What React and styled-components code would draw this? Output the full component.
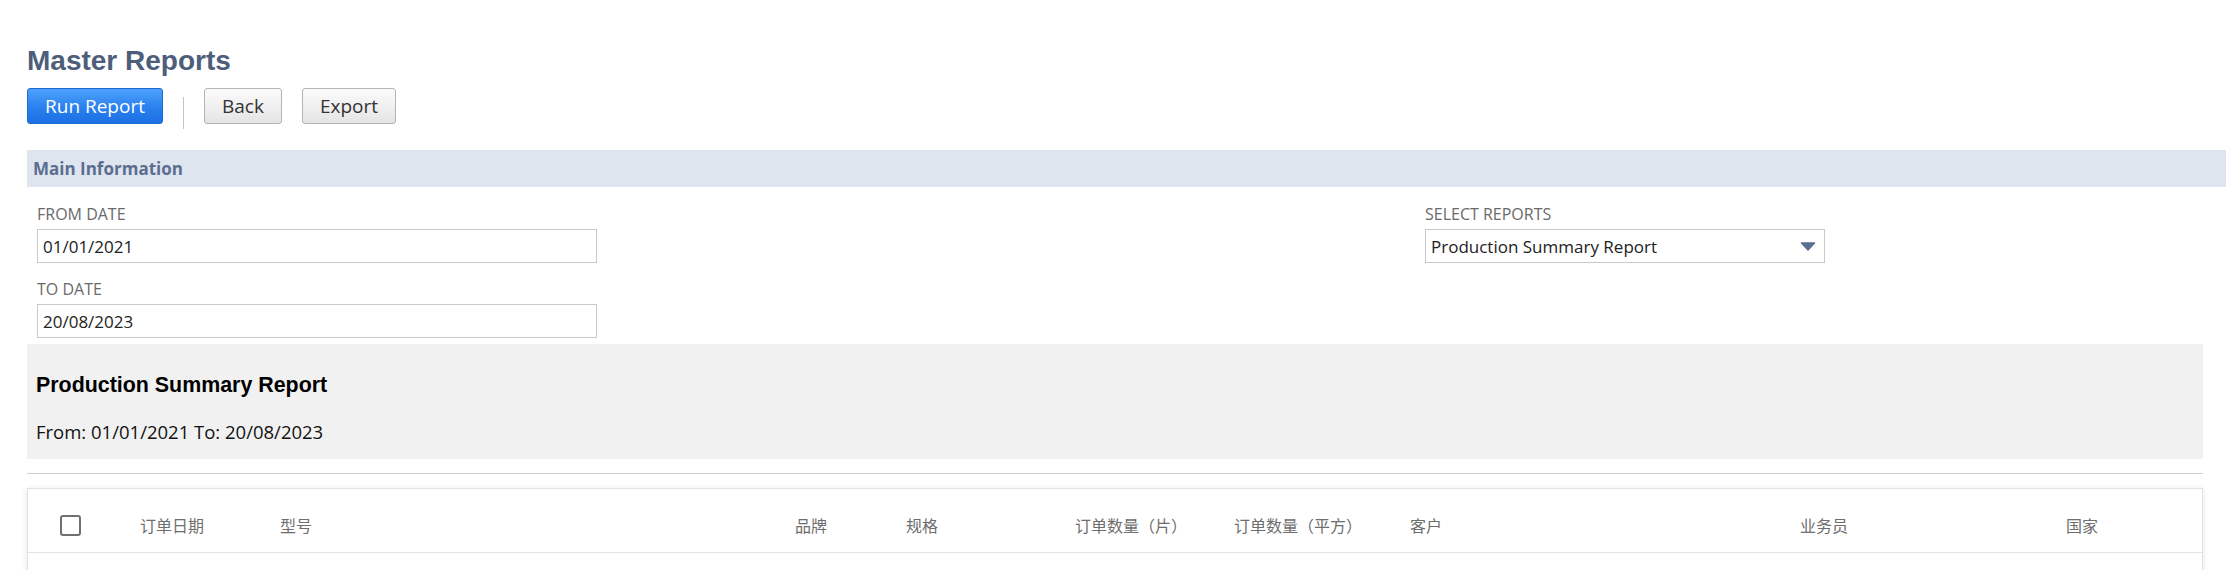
import React from "react";
import styled, { createGlobalStyle } from "styled-components";

const GlobalStyle = createGlobalStyle`
  html, body {
    margin: 0;
    padding: 0;
    background: #ffffff;
  }
  body {
    font-family: "Open Sans", "Noto Sans", sans-serif;
    overflow: hidden;
  }
`;

const Page = styled.div`
  padding: 45px 23px 0 27px;
`;

const Title = styled.h1`
  margin: 0;
  font-family: "Liberation Sans", Arial, sans-serif;
  font-weight: 700;
  font-size: 28px;
  line-height: 32px;
  color: #4d5e7a;
`;

const Toolbar = styled.div`
  display: flex;
  align-items: flex-start;
  gap: 20px;
  margin-top: 11px;
  height: 36px;
`;

const Button = styled.button`
  box-sizing: border-box;
  height: 36px;
  padding: 0 17px;
  border-radius: 3px;
  font-family: "Open Sans", sans-serif;
  font-weight: 500;
  font-size: 19px;
  line-height: 34px;
  cursor: pointer;
  border: 1px solid ${(p) => (p.$primary ? "#1d69cf" : "#b4b4b4")};
  color: ${(p) => (p.$primary ? "#ffffff" : "#333333")};
  background: ${(p) =>
    p.$primary
      ? "linear-gradient(to bottom, #4ea2fa 0%, #2a80ef 55%, #1b70e4 100%)"
      : "linear-gradient(to bottom, #fbfbfb 0%, #eeeeee 60%, #e4e4e4 100%)"};
`;

const Divider = styled.div`
  flex: none;
  width: 1px;
  height: 32px;
  margin-top: 9px;
  background: #c4c4c4;
`;

const SectionBand = styled.div`
  margin-top: 26px;
  margin-right: -23px;
  height: 37px;
  padding-left: 6px;
  background: #dfe5ef;
  font-family: "Open Sans", sans-serif;
  font-weight: 700;
  font-size: 17px;
  line-height: 37px;
  color: #5b6e90;
`;

const FormGrid = styled.div`
  display: grid;
  grid-template-columns: 1388px 400px;
  padding-left: 10px;
  margin-top: 17px;
`;

const FieldColumn = styled.div`
  display: flex;
  flex-direction: column;
  gap: 16px;
`;

const Field = styled.div`
  display: flex;
  flex-direction: column;
  width: ${(p) => p.$width}px;
`;

const Label = styled.div`
  font-family: "Open Sans", sans-serif;
  font-size: 16px;
  line-height: 20px;
  color: #6a6a6a;
  text-transform: uppercase;
`;

const TextInput = styled.div`
  box-sizing: border-box;
  margin-top: 5px;
  height: 34px;
  border: 1px solid #c9c9c9;
  padding-left: 5px;
  font-family: "Open Sans", sans-serif;
  font-size: 17px;
  line-height: 31px;
  color: #222222;
  display: flex;
  align-items: center;
  justify-content: space-between;
`;

const Arrow = styled.svg`
  width: 16px;
  height: 9px;
  margin-right: 8px;
  margin-top: 1px;
`;

const ReportPanel = styled.div`
  margin-top: 6px;
  background: #f1f1f1;
  padding: 29px 9px 15px;
`;

const ReportTitle = styled.div`
  font-family: "Liberation Sans", Arial, sans-serif;
  font-weight: 700;
  font-size: 21.4px;
  line-height: 24px;
  color: #000000;
`;

const ReportRange = styled.div`
  margin-top: 23px;
  font-family: "Open Sans", sans-serif;
  font-size: 18.5px;
  line-height: 24px;
  color: #111111;
`;

const Rule = styled.div`
  margin-top: 14px;
  height: 1px;
  background: #cfcfcf;
`;

const TableCard = styled.div`
  margin-top: 14px;
  border: 1px solid #e2e2e2;
  background: #ffffff;
  box-shadow: 0 1px 6px rgba(0, 0, 0, 0.1);
`;

const HeaderRow = styled.div`
  box-sizing: border-box;
  display: grid;
  grid-template-columns: 112px 140px 515px 111px 169px 159px 176px 390px 266px 1fr;
  align-items: center;
  height: 64px;
  padding-top: 9px;
  border-bottom: 1px solid #e3e3e3;
`;

const HeaderCell = styled.div`
  font-family: "Noto Sans CJK SC", "Noto Sans", sans-serif;
  font-size: 16px;
  line-height: 24px;
  color: #6e6e6e;
  white-space: nowrap;
  padding-left: ${(p) => p.$pad || 0}px;
`;

const Checkbox = styled.div`
  box-sizing: border-box;
  width: 21px;
  height: 21px;
  border: 2px solid #707070;
  border-radius: 3px;
`;

const BodyArea = styled.div`
  height: 80px;
`;

const columns = [
  "订单日期",
  "型号",
  "品牌",
  "规格",
  "订单数量（片）",
  "订单数量（平方）",
  "客户",
  "业务员",
  "国家",
];

export default function App() {
  return (
    <>
      <GlobalStyle />
      <Page>
        <Title>Master Reports</Title>
        <Toolbar>
          <Button $primary>Run Report</Button>
          <Divider />
          <Button>Back</Button>
          <Button>Export</Button>
        </Toolbar>
        <SectionBand>Main Information</SectionBand>
        <FormGrid>
          <FieldColumn>
            <Field $width={560}>
              <Label>From Date</Label>
              <TextInput>01/01/2021</TextInput>
            </Field>
            <Field $width={560}>
              <Label>To Date</Label>
              <TextInput>20/08/2023</TextInput>
            </Field>
          </FieldColumn>
          <FieldColumn>
            <Field $width={400}>
              <Label>Select Reports</Label>
              <TextInput>
                Production Summary Report
                <Arrow viewBox="0 0 16 9">
                  <path
                    d="M1.5 1 H14.5 L8 8 Z"
                    fill="#5a6f92"
                    stroke="#5a6f92"
                    strokeWidth="1.5"
                    strokeLinejoin="round"
                  />
                </Arrow>
              </TextInput>
            </Field>
          </FieldColumn>
        </FormGrid>
        <ReportPanel>
          <ReportTitle>Production Summary Report</ReportTitle>
          <ReportRange>From: 01/01/2021 To: 20/08/2023</ReportRange>
        </ReportPanel>
        <Rule />
        <TableCard>
          <HeaderRow>
            <HeaderCell $pad={32}>
              <Checkbox />
            </HeaderCell>
            {columns.map((c) => (
              <HeaderCell key={c}>{c}</HeaderCell>
            ))}
          </HeaderRow>
          <BodyArea />
        </TableCard>
      </Page>
    </>
  );
}
